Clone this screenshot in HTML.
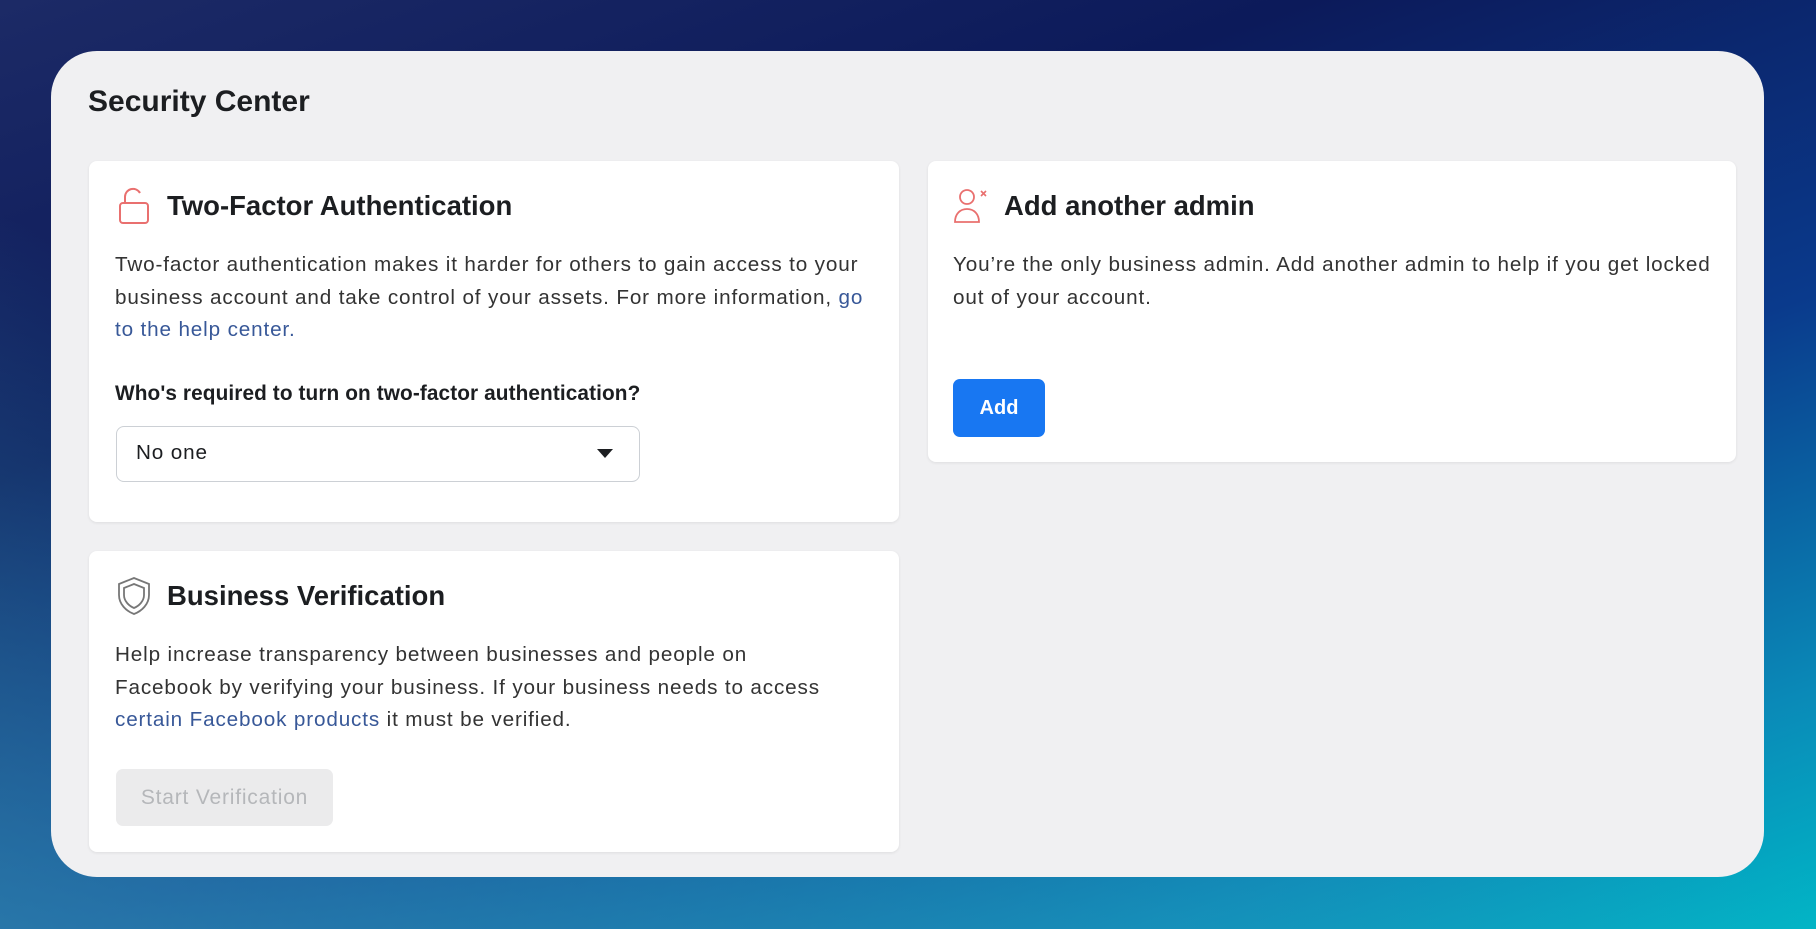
<!DOCTYPE html>
<html><head><meta charset="utf-8"><style>
*{margin:0;padding:0;box-sizing:border-box}
body{width:1816px;height:929px;overflow:hidden;font-family:"Liberation Sans",Arial,sans-serif;
background:linear-gradient(160deg,#1c2a66 0%,#0c1a5a 30%,#0a3a8c 60%,#0a8ab8 85%,#00b6c6 100%);position:relative}
.bg2{position:absolute;inset:0;background:linear-gradient(20deg,rgba(60,160,190,.6) 0%,rgba(60,120,180,0) 45%)}
.outer{position:absolute;left:51px;top:51px;width:1713px;height:826px;background:#f0f0f2;border-radius:46px}
h1{position:absolute;left:88px;top:85px;font-size:30px;font-weight:bold;color:#1c1e21}
.card{position:absolute;background:#fff;border-radius:8px;box-shadow:0 1px 3px rgba(0,0,0,.08)}
.hd{position:absolute;font-size:27.5px;font-weight:bold;color:#1c1e21;top:190px}
.p{position:absolute;font-size:20.7px;line-height:32.5px;color:#333;white-space:nowrap;letter-spacing:0.85px}
.lk{color:#385898}
.ic{position:absolute}
</style></head><body><div class="bg2"></div>
<div class="outer"></div>
<h1>Security Center</h1>

<div class="card" style="left:89px;top:161px;width:810px;height:361px"></div>
<svg class="ic" style="left:117px;top:186px" width="36" height="40" viewBox="0 0 36 40"><path d="M8 17V11a8 8 0 0 1 15-4" fill="none" stroke="#e9706f" stroke-width="2"/><rect x="3" y="17" width="28" height="20" rx="3" fill="none" stroke="#e9706f" stroke-width="2"/></svg>
<div class="hd" style="left:167px">Two-Factor Authentication</div>
<div class="p" style="left:115px;top:249px">Two-factor authentication makes it harder for others to gain access to your<br>business account and take control of your assets. For more information, <span class="lk">go</span><br><span class="lk">to the help center.</span></div>
<div class="p" style="left:115px;top:378px;font-weight:bold;color:#1c1e21;font-size:20.8px;letter-spacing:0.1px">Who's required to turn on two-factor authentication?</div>
<div style="position:absolute;left:116px;top:426px;width:524px;height:56px;border:1px solid #ccd0d5;border-radius:8px;background:#fff"></div>
<div class="p" style="left:136px;top:437px;color:#1c1e21">No one</div>
<svg class="ic" style="left:596px;top:448px" width="18" height="12"><path d="M1 1h16L9 10z" fill="#1c1e21"/></svg>

<div class="card" style="left:89px;top:551px;width:810px;height:301px"></div>
<svg class="ic" style="left:115px;top:576px" width="38" height="40" viewBox="0 0 38 40"><path d="M19 2L4 8v11c0 9 7 16 15 19 8-3 15-10 15-19V8z" fill="none" stroke="#777" stroke-width="1.8"/><path d="M19 8L9 12v7c0 6 5 11 10 13 5-2 10-7 10-13v-7z" fill="none" stroke="#777" stroke-width="1.8"/></svg>
<div class="hd" style="left:167px;top:580px">Business Verification</div>
<div class="p" style="left:115px;top:639px">Help increase transparency between businesses and people on<br>Facebook by verifying your business. If your business needs to access<br><span class="lk">certain Facebook products</span> it must be verified.</div>
<div style="position:absolute;left:116px;top:769px;width:217px;height:57px;background:#ebebec;border-radius:7px;color:#b5b7ba;font-size:21px;letter-spacing:0.8px;line-height:57px;text-align:center">Start Verification</div>

<div class="card" style="left:928px;top:161px;width:808px;height:301px"></div>
<svg class="ic" style="left:952px;top:186px" width="40" height="40" viewBox="0 0 40 40"><circle cx="15" cy="11" r="7" fill="none" stroke="#e9706f" stroke-width="1.8"/><path d="M3 36c0-8 5-13 12-13s12 5 12 13z" fill="none" stroke="#e9706f" stroke-width="1.8"/><path d="M29 5l5 5M34 5l-5 5" stroke="#e9706f" stroke-width="1.6"/></svg>
<div class="hd" style="left:1004px">Add another admin</div>
<div class="p" style="left:953px;top:249px">You’re the only business admin. Add another admin to help if you get locked<br>out of your account.</div>
<div style="position:absolute;left:953px;top:379px;width:92px;height:58px;background:#1877f2;border-radius:7px;color:#fff;font-weight:bold;font-size:20px;line-height:58px;text-align:center">Add</div>
</body></html>
